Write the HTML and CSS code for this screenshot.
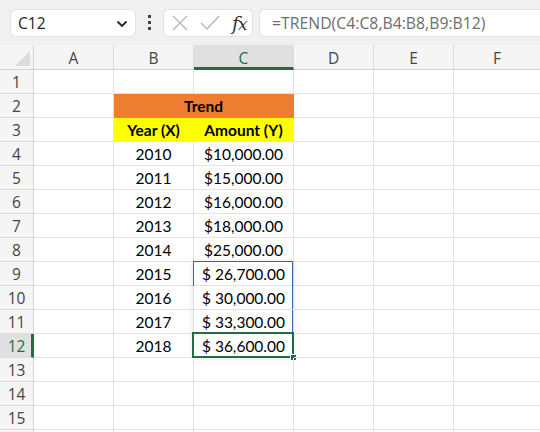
FILE: index.html
```html
<!DOCTYPE html>
<html>
<head>
<meta charset="utf-8">
<link rel="stylesheet" href="styles.css">
</head>
<body>
<div class="app">
  <div class="toolbar">
    <div class="namebox">
      <span class="name">C12</span>
      <svg class="chev" width="12" height="8" viewBox="0 0 12 8"><path d="M1.5 1.5 L6 6 L10.5 1.5" fill="none" stroke="#222" stroke-width="1.8"/></svg>
    </div>
    <div class="dots"><span></span><span></span><span></span></div>
    <div class="fxbox">
      <svg width="18" height="18" viewBox="0 0 18 18"><path d="M2 2 L16 16 M16 2 L2 16" stroke="#b4b4b4" stroke-width="1.3" fill="none"/></svg>
      <svg width="20" height="18" viewBox="0 0 20 18"><path d="M1 9 L7 15 L19 2" stroke="#b4b4b4" stroke-width="1.3" fill="none"/></svg>
      <span class="fx"><i>f</i><i class="x">x</i></span>
    </div>
    <div class="formula">=TREND(C4:C8,B4:B8,B9:B12)</div>
  </div>
  <div class="sheet">
    <div class="corner"><span class="tri"></span></div>
    <div class="ch">A</div>
    <div class="ch">B</div>
    <div class="ch sel">C</div>
    <div class="ch">D</div>
    <div class="ch">E</div>
    <div class="ch last">F</div>

    <div class="rh">1</div><div class="c"></div><div class="c"></div><div class="c"></div><div class="c"></div><div class="c"></div><div class="c last"></div>

    <div class="rh">2</div><div class="c"></div><div class="c merged orange">Trend</div><div class="c"></div><div class="c"></div><div class="c last"></div>

    <div class="rh">3</div><div class="c"></div><div class="c yellow">Year (X)</div><div class="c yellow">Amount (Y)</div><div class="c"></div><div class="c"></div><div class="c last"></div>

    <div class="rh">4</div><div class="c"></div><div class="c ctr">2010</div><div class="c ctr">$10,000.00</div><div class="c"></div><div class="c"></div><div class="c last"></div>
    <div class="rh">5</div><div class="c"></div><div class="c ctr">2011</div><div class="c ctr">$15,000.00</div><div class="c"></div><div class="c"></div><div class="c last"></div>
    <div class="rh">6</div><div class="c"></div><div class="c ctr">2012</div><div class="c ctr">$16,000.00</div><div class="c"></div><div class="c"></div><div class="c last"></div>
    <div class="rh">7</div><div class="c"></div><div class="c ctr">2013</div><div class="c ctr">$18,000.00</div><div class="c"></div><div class="c"></div><div class="c last"></div>
    <div class="rh">8</div><div class="c"></div><div class="c ctr">2014</div><div class="c ctr">$25,000.00</div><div class="c"></div><div class="c"></div><div class="c last"></div>

    <div class="rh">9</div><div class="c"></div><div class="c ctr">2015</div><div class="c acc rng"><span>$</span><span>26,700.00</span><div class="range"></div></div><div class="c"></div><div class="c"></div><div class="c last"></div>
    <div class="rh">10</div><div class="c"></div><div class="c ctr">2016</div><div class="c acc"><span>$</span><span>30,000.00</span></div><div class="c"></div><div class="c"></div><div class="c last"></div>
    <div class="rh">11</div><div class="c"></div><div class="c ctr">2017</div><div class="c acc"><span>$</span><span>33,300.00</span></div><div class="c"></div><div class="c"></div><div class="c last"></div>
    <div class="rh sel">12</div><div class="c"></div><div class="c ctr">2018</div><div class="c acc active"><span>$</span><span>36,600.00</span><div class="cursor"><span class="handle"></span></div></div><div class="c"></div><div class="c"></div><div class="c last"></div>

    <div class="rh">13</div><div class="c"></div><div class="c"></div><div class="c"></div><div class="c"></div><div class="c"></div><div class="c last"></div>
    <div class="rh">14</div><div class="c"></div><div class="c"></div><div class="c"></div><div class="c"></div><div class="c"></div><div class="c last"></div>
    <div class="rh">15</div><div class="c"></div><div class="c"></div><div class="c"></div><div class="c"></div><div class="c"></div><div class="c last"></div>
    <div class="rh"></div><div class="c"></div><div class="c"></div><div class="c"></div><div class="c"></div><div class="c"></div><div class="c last"></div>
  </div>
</div>
</body>
</html>
```

FILE: styles.css
```css
html, body {
  margin: 0;
  padding: 0;
  background: #ffffff;
}
.app {
  width: 540px;
  height: 432px;
  overflow: hidden;
}
.toolbar {
  height: 45px;
  background: #f0f0f0;
  display: flex;
  align-items: center;
  padding-left: 10px;
  box-sizing: border-box;
}
.namebox {
  width: 126px;
  height: 28px;
  box-sizing: border-box;
  background: #fff;
  border: 1px solid #e3e3e3;
  border-radius: 6px;
  display: flex;
  align-items: center;
  justify-content: space-between;
  padding: 0 7px 0 7px;
  font-family: "Open Sans", "Noto Sans", sans-serif;
  font-size: 15.5px;
  color: #222;
}
.chev { margin-top: 2px; }
.dots {
  width: 27px;
  display: flex;
  flex-direction: column;
  align-items: center;
  gap: 3px;
}
.dots span {
  width: 3px;
  height: 3px;
  background: #444;
  display: block;
}
.fxbox {
  width: 90px;
  height: 28px;
  box-sizing: border-box;
  background: #fff;
  border: 1px solid #e3e3e3;
  border-radius: 6px;
  display: flex;
  align-items: center;
  padding-left: 7px;
  gap: 11px;
}
.fx {
  font-family: "DejaVu Serif", "Liberation Serif", serif;
  font-size: 19px;
  color: #333;
  margin-left: 1px;
  letter-spacing: -1px;
}
.fx .x { font-size: 17px; }
.formula {
  margin-left: 6px;
  flex: 1;
  height: 28px;
  box-sizing: border-box;
  background: #fff;
  border: 1px solid #e3e3e3;
  border-right: none;
  border-radius: 6px 0 0 6px;
  display: flex;
  align-items: center;
  padding-left: 12px;
  font-family: "Open Sans", "Noto Sans", sans-serif;
  font-size: 15.8px;
  color: #6e6e6e;
  white-space: nowrap;
}
.sheet {
  display: grid;
  grid-template-columns: 34px 80px 80px 100px 80px 80px 86px;
  grid-template-rows: 25px repeat(16, 24px);
  font-family: "Lato", "Liberation Sans", sans-serif;
  font-size: 15.5px;
  color: #000;
}
.corner {
  background: #f5f5f5;
  border-right: 1px solid #d4d4d4;
  border-bottom: 1px solid #d4d4d4;
  position: relative;
}
.tri {
  position: absolute;
  right: 3px;
  bottom: 3px;
  width: 0;
  height: 0;
  border-left: 15px solid transparent;
  border-bottom: 15px solid #dcdcdc;
}
.ch {
  background: #f5f5f5;
  border-right: 1px solid #dadada;
  border-bottom: 1px solid #d4d4d4;
  display: flex;
  align-items: center;
  justify-content: center;
  font-family: "Open Sans", "Noto Sans", sans-serif;
  font-size: 15.5px;
  color: #444;
  padding-top: 1px;
}
.ch.sel {
  background: #e0e0e0;
  border-bottom: 3px solid #1e6e42;
  color: #1e6e42;
  padding-top: 3px;
}
.ch.last { border-right: none; }
.rh {
  background: #f5f5f5;
  border-right: 1px solid #d4d4d4;
  border-bottom: 1px solid #dadada;
  display: flex;
  align-items: center;
  justify-content: center;
  font-family: "Open Sans", "Noto Sans", sans-serif;
  font-size: 15.5px;
  color: #444;
}
.rh.sel {
  background: #e0e0e0;
  border-right: 3px solid #1e6e42;
  color: #1e6e42;
  padding-left: 2px;
}
.c {
  border-right: 1px solid #e1e1e1;
  border-bottom: 1px solid #e1e1e1;
  display: flex;
  align-items: center;
  white-space: nowrap;
  position: relative;
}
.c.last { border-right: none; }
.ctr { justify-content: center; }
.merged {
  grid-column: span 2;
  justify-content: center;
}
.orange {
  background: #ed7d31;
  font-weight: bold;
  border-color: #ed7d31;
}
.yellow {
  background: #ffff00;
  font-weight: bold;
  justify-content: center;
  border-color: #ffff00;
}
.acc {
  justify-content: space-between;
  padding: 0 8px 0 8px;
}
.range {
  position: absolute;
  left: -1px;
  top: -1px;
  width: 100px;
  height: 96px;
  border: 1px solid #3a62b0;
  box-sizing: border-box;
  box-shadow: 0 1px 6px rgba(0,0,0,0.12);
  pointer-events: none;
}
.cursor {
  position: absolute;
  left: -2px;
  top: -2px;
  width: 102px;
  height: 26px;
  border: 2px solid #1e6e42;
  box-sizing: border-box;
}
.handle {
  position: absolute;
  right: -5px;
  bottom: -5px;
  width: 5px;
  height: 5px;
  background: #1e6e42;
  border: 1px solid #fff;
}
```
